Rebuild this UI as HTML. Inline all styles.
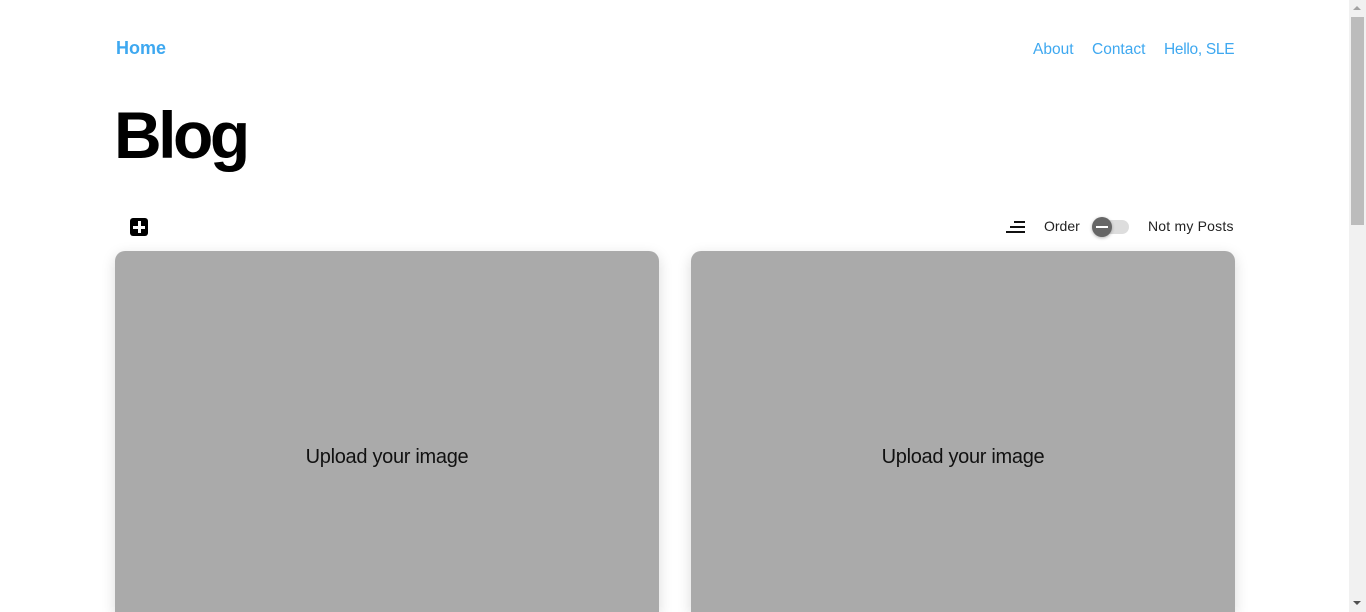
<!DOCTYPE html>
<html><head><style>
html,body{margin:0;width:1366px;height:612px;overflow:hidden}
body{background:#fff;font-family:"Liberation Sans",sans-serif;position:relative}
.a{position:absolute;white-space:nowrap}
.nav{color:#3ea8f0;font-size:15.5px}
.card{position:absolute;top:251px;width:544px;height:361px;background:#aaa;border-radius:10px 10px 0 0;box-shadow:0 4px 14px rgba(0,0,0,.15)}
.card span{position:absolute;left:0;right:0;top:195px;text-align:center;font-size:20px;color:#111;letter-spacing:-0.3px}
</style></head><body>
<div class="a" style="left:116px;top:38px;font-size:18px;font-weight:bold;color:#3ea8f0">Home</div>
<div class="a nav" style="left:1033px;top:41px">About</div>
<div class="a nav" style="left:1092px;top:41px">Contact</div>
<div class="a nav" style="left:1164px;top:41px;letter-spacing:-0.3px">Hello, SLE</div>
<div class="a" style="left:114px;top:97px;font-size:66px;font-weight:bold;color:#000;letter-spacing:-3.5px">Blog</div>
<div class="a" style="left:130px;top:218px;width:18px;height:18px;background:#000;border-radius:3px"></div>
<div class="a" style="left:133px;top:226px;width:12px;height:2.5px;background:#fff"></div>
<div class="a" style="left:138px;top:221px;width:2.5px;height:12px;background:#fff"></div>
<div class="a" style="left:1014px;top:221px;width:11px;height:2px;background:#111"></div>
<div class="a" style="left:1010px;top:226px;width:15px;height:2px;background:#111"></div>
<div class="a" style="left:1006px;top:231px;width:19px;height:2px;background:#111"></div>
<div class="a" style="left:1044px;top:218px;font-size:14px;color:#222">Order</div>
<div class="a" style="left:1095px;top:220px;width:34px;height:14px;border-radius:7px;background:#ddd"></div>
<div class="a" style="left:1092px;top:217px;width:20px;height:20px;border-radius:50%;background:#666;box-shadow:0 1px 3px rgba(0,0,0,.3)"></div>
<div class="a" style="left:1096px;top:226px;width:12px;height:2px;background:#fff"></div>
<div class="a" style="left:1148px;top:218px;font-size:14px;color:#222;letter-spacing:0.2px">Not my Posts</div>
<div class="card" style="left:115px"><span>Upload your image</span></div>
<div class="card" style="left:691px"><span>Upload your image</span></div>
<div class="a" style="left:1349px;top:0;width:17px;height:612px;background:#f1f1f1"></div>
<div class="a" style="left:1351px;top:17px;width:13px;height:208px;background:#bcbcbc"></div>
<div class="a" style="left:1353px;top:6px;width:0;height:0;border-left:4px solid transparent;border-right:4px solid transparent;border-bottom:4px solid #a3a3a3"></div>
<div class="a" style="left:1353px;top:601px;width:0;height:0;border-left:4px solid transparent;border-right:4px solid transparent;border-top:4px solid #505050"></div>
</body></html>
